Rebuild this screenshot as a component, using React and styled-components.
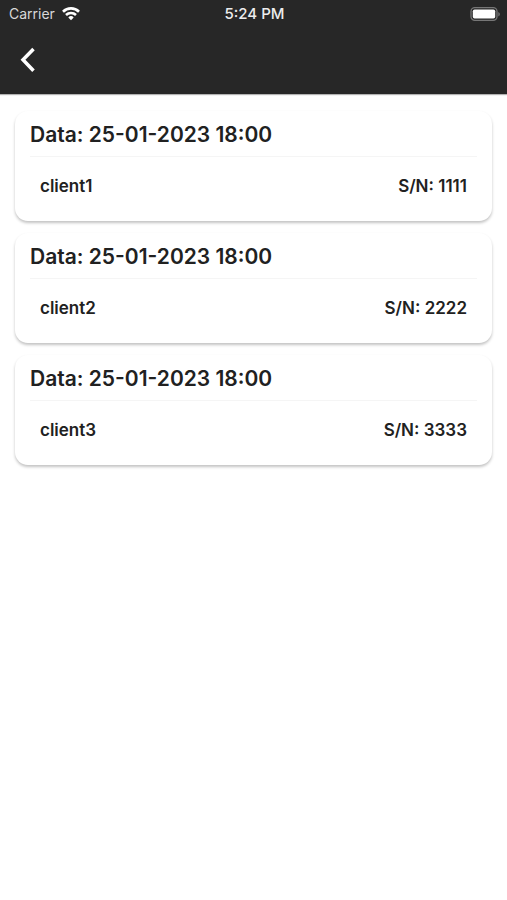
import React from "react";
import styled, { createGlobalStyle } from "styled-components";

const GlobalStyle = createGlobalStyle`
  * { box-sizing: border-box; }
  body { margin: 0; background: #fff; color: #212121; font-family: Inter, Roboto, sans-serif; }
`;
const Header = styled.header`
  background: #272727;
  color: #fff;
  box-shadow: 0 1px 1px rgba(0, 0, 0, 0.3);
`;
const StatusBar = styled.div`
  display: grid;
  grid-template-columns: 1fr auto 1fr;
  align-items: center;
  height: 27px;
  padding: 0 7px 0 9px;
  font-size: 14px;
  line-height: 20px;
`;
const Carrier = styled.div`
  display: flex;
  align-items: center;
  gap: 7px;
  color: #d8d8d8;
`;
const Clock = styled.time`
  font-size: 15px;
  font-weight: 500;
  color: #ececec;
`;
const Battery = styled.svg`
  justify-self: end;
`;
const NavBar = styled.nav`
  display: flex;
  align-items: center;
  height: 67px;
  padding: 0 10px 2px;
`;
const BackButton = styled.button`
  display: grid;
  place-items: center;
  width: 36px;
  height: 40px;
  padding: 0;
  border: 0;
  background: none;
  color: #fff;
  cursor: pointer;
`;
const List = styled.main`
  display: flex;
  flex-direction: column;
  gap: 12px;
  padding: 17px 15px;
`;
const Card = styled.article`
  padding: 10px 15px 7px;
  border-radius: 13px;
  background: #fff;
  box-shadow: 0 2px 3px rgba(0, 0, 0, 0.24);
`;
const CardTitle = styled.h2`
  margin: 0;
  padding-bottom: 7px;
  border-bottom: 1px solid #f5f5f5;
  font-size: 21px;
  line-height: 28px;
  font-weight: 600;
`;
const Details = styled.div`
  display: flex;
  justify-content: space-between;
  gap: 16px;
  padding: 17px 10px 16px;
  font-size: 17px;
  line-height: 24px;
  font-weight: 600;
`;

const records = [
  { client: "client1", serial: "1111" },
  { client: "client2", serial: "2222" },
  { client: "client3", serial: "3333" },
];

export default function App() {
  return (
    <>
      <GlobalStyle />
      <Header>
        <StatusBar>
          <Carrier>
            Carrier
            <svg width="18" height="14" viewBox="0 0 18 14" fill="none" stroke="#fff" strokeWidth="2.6" aria-label="Wi-Fi">
              <path d="M1 4.7a11.4 11.4 0 0 1 16 0M4 8a7.2 7.2 0 0 1 10 0" />
              <path d="M9 13.2 6.3 10.4a3.8 3.8 0 0 1 5.4 0Z" fill="#fff" stroke="none" />
            </svg>
          </Carrier>
          <Clock>5:24 PM</Clock>
          <Battery width="30" height="14" viewBox="0 0 30 14" aria-label="Battery full">
            <rect x="1" y="0.7" width="26" height="12.6" rx="3.8" fill="none" stroke="#777" strokeWidth="1.3" />
            <rect x="2.8" y="2.5" width="22.4" height="9" rx="1.8" fill="#fff" />
            <path d="M28.3 5v4.4c2-.8 2-3.6 0-4.4Z" fill="#777" />
          </Battery>
        </StatusBar>
        <NavBar>
          <BackButton type="button" aria-label="Back">
            <svg width="16" height="26" viewBox="0 0 16 26" fill="none" stroke="currentColor" strokeWidth="3.5">
              <path d="M13.5 2 3 12.8l10.5 11" />
            </svg>
          </BackButton>
        </NavBar>
      </Header>
      <List>
        {records.map(({ client, serial }) => (
          <Card key={client}>
            <CardTitle>Data: 25-01-2023 18:00</CardTitle>
            <Details>
              <span>{client}</span>
              <span>S/N: {serial}</span>
            </Details>
          </Card>
        ))}
      </List>
    </>
  );
}
